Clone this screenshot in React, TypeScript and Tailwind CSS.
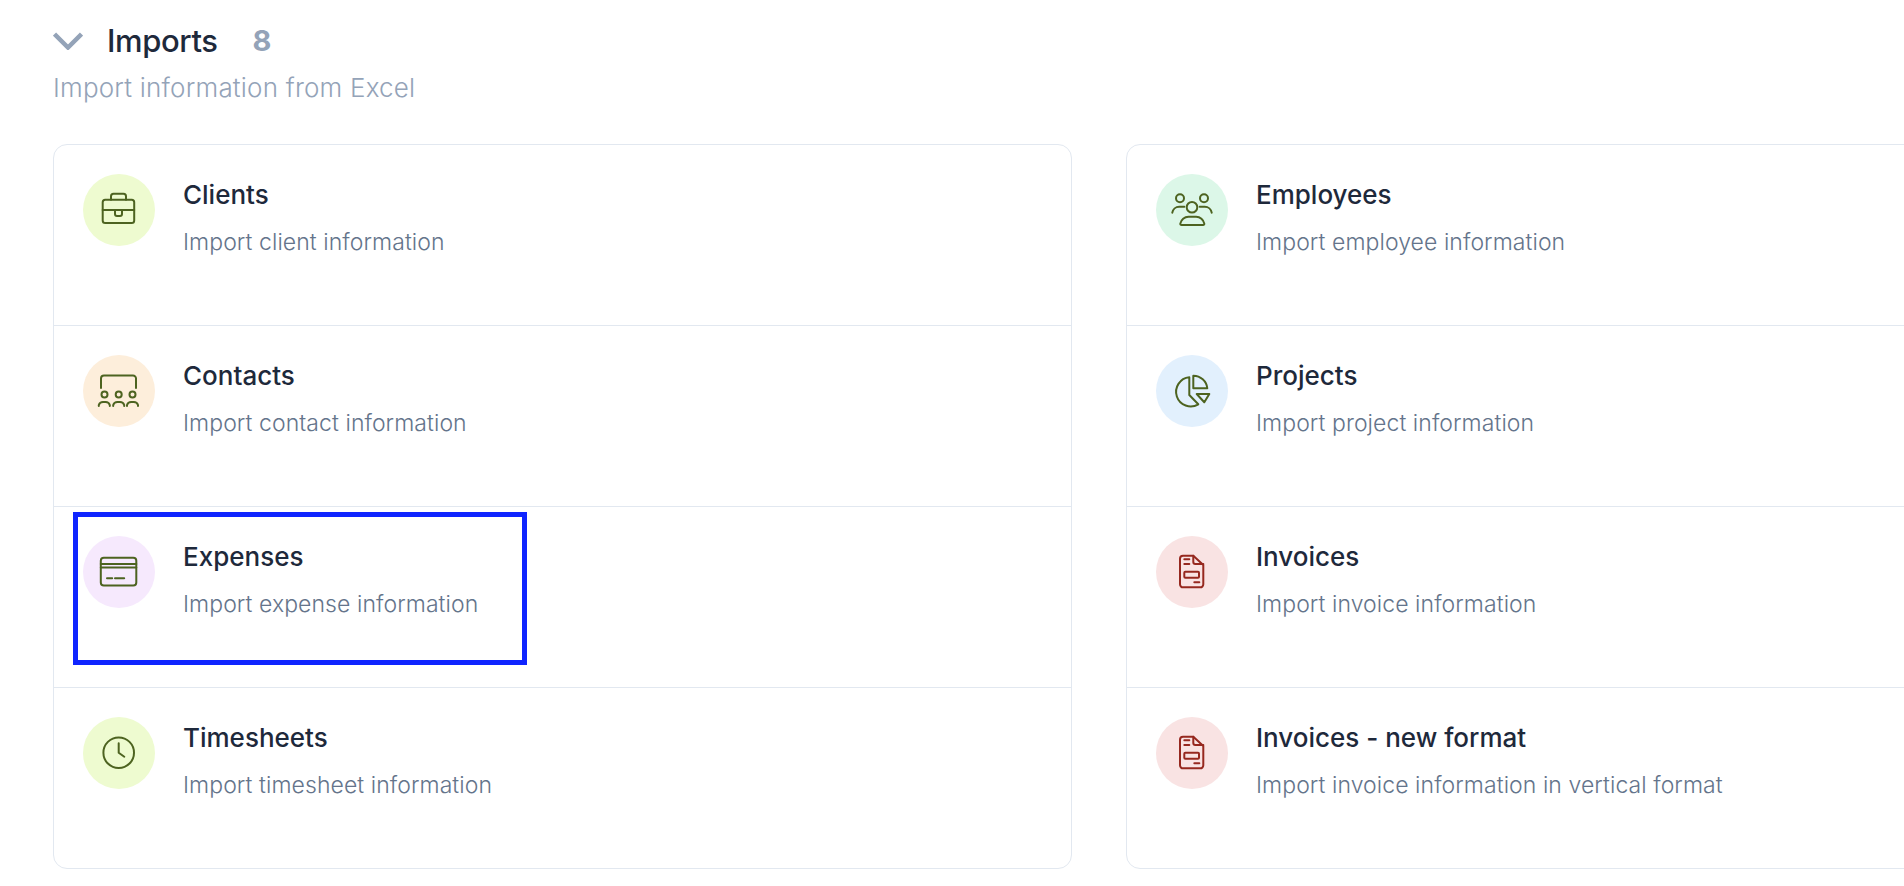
import React from 'react';

const GREEN = 'stroke-[#4d6320]';
const RED = 'stroke-[#96281f]';

const BriefcaseIcon = () => (
    <>
        <rect x="19.7" y="25.7" width="31.5" height="23.3" rx="2.5" />
        <path d="M28 25.7v-3.5a2.5 2.5 0 0 1 2.5-2.5h10a2.5 2.5 0 0 1 2.5 2.5v3.5" />
        <path d="M19.7 36h31.5" />
        <path d="M32 36v4a2 2 0 0 0 2 2h3a2 2 0 0 0 2-2v-4" />
    </>
);

const MeetingIcon = () => (
    <>
        <path d="M18 33V23.5a3 3 0 0 1 3-3h29a3 3 0 0 1 3 3V33" />
        <circle cx="21.5" cy="39.5" r="3" />
        <circle cx="35.7" cy="39.5" r="3" />
        <circle cx="49.5" cy="39.5" r="3" />
        <path d="M15.8 51v-1a4.5 4.5 0 0 1 4.5-3h2a4.5 4.5 0 0 1 4.5 3v1" />
        <path d="M30.2 51v-1a4.5 4.5 0 0 1 4.5-3h2a4.5 4.5 0 0 1 4.5 3v1" />
        <path d="M44 51v-1a4.5 4.5 0 0 1 4.5-3h2a4.5 4.5 0 0 1 4.5 3v1" />
    </>
);

const CardIcon = () => (
    <>
        <rect x="17.8" y="21.8" width="35.5" height="27.8" rx="3" />
        <path d="M17.8 28h35.5M17.8 31.5h35.5" />
        <path d="M24 42.3h5.2M32 42.3h9.2" />
    </>
);

const TeamIcon = () => (
    <>
        <circle cx="24" cy="24.3" r="4" />
        <circle cx="48" cy="24.3" r="4" />
        <circle cx="36" cy="33.3" r="5.3" />
        <path d="M16.3 38.7a7 7 0 0 1 7-6h5" />
        <path d="M55.7 38.7a7 7 0 0 0-7-6h-5" />
        <path d="M25.5 51a1.2 1.2 0 0 1-1.2-1.4 8.4 8.4 0 0 1 8.2-6.9h7.6a8.4 8.4 0 0 1 8.2 6.9 1.2 1.2 0 0 1-1.2 1.4Z" />
    </>
);

const PieIcon = () => (
    <>
        <path d="M33.3 22.3a14.6 14.6 0 1 0 9 27L33.3 40Z" />
        <path d="M37.3 20.7v12.6h14a14 14 0 0 0-14-12.6Z" />
        <path d="M40.7 39h12.6l-5 8.3Z" />
    </>
);

const InvoiceIcon = () => (
    <>
        <path d="M37.3 19.7H27a3 3 0 0 0-3 3v25.6a3 3 0 0 0 3 3h17.3a3 3 0 0 0 3-3V29Z" />
        <path d="M37.3 19.7V26a2 2 0 0 0 2 2h8" />
        <path d="M28.3 23.3h5M28.3 28h5" />
        <rect x="28.3" y="35.7" width="14.7" height="6" rx="1" />
        <path d="M38.3 46.3h5" />
    </>
);

const ClockIcon = () => (
    <>
        <circle cx="35.7" cy="35.7" r="15.3" />
        <path d="M35.7 26.3v9.4l5.6 4" />
    </>
);

const ImportRow = ({ title, description, circle, stroke, icon, last }: any) => (
    <div className={`flex gap-[28px] pt-[29px] pl-[29px] ${last ? 'h-[180px]' : 'h-[181px] border-b border-[#e2e8f0]'}`}>
        <div className={`h-[72px] w-[72px] shrink-0 rounded-full ${circle}`}>
            <svg viewBox="0 0 72 72" className={`h-[72px] w-[72px] fill-none stroke-2 ${stroke}`} strokeLinecap="round" strokeLinejoin="round">
                {icon}
            </svg>
        </div>
        <div>
            <div className="mt-[4px] text-[26px] leading-[34px] font-medium text-[#1e293b]">{title}</div>
            <div className="mt-[13px] text-[23px] leading-[34px] font-light tracking-[0.07px] text-[#64748b]">{description}</div>
        </div>
    </div>
);

const leftRows = [
    { title: 'Clients', description: 'Import client information', circle: 'bg-[#eefbd0]', stroke: GREEN, icon: <BriefcaseIcon /> },
    { title: 'Contacts', description: 'Import contact information', circle: 'bg-[#fdeedb]', stroke: GREEN, icon: <MeetingIcon /> },
    { title: 'Expenses', description: 'Import expense information', circle: 'bg-[#f6e9fd]', stroke: GREEN, icon: <CardIcon /> },
    { title: 'Timesheets', description: 'Import timesheet information', circle: 'bg-[#eefbd0]', stroke: GREEN, icon: <ClockIcon /> },
];

const rightRows = [
    { title: 'Employees', description: 'Import employee information', circle: 'bg-[#dcf7e8]', stroke: GREEN, icon: <TeamIcon /> },
    { title: 'Projects', description: 'Import project information', circle: 'bg-[#e2f0fd]', stroke: GREEN, icon: <PieIcon /> },
    { title: 'Invoices', description: 'Import invoice information', circle: 'bg-[#f9e3e3]', stroke: RED, icon: <InvoiceIcon /> },
    { title: 'Invoices - new format', description: 'Import invoice information in vertical format', circle: 'bg-[#f9e3e3]', stroke: RED, icon: <InvoiceIcon /> },
];

const ImportCard = ({ rows }: any) => (
    <div className="w-[1019px] shrink-0 rounded-[14px] border border-[#e2e8f0] bg-white">
        {rows.map((row: any, i: number) => (
            <ImportRow key={row.title} {...row} last={i === rows.length - 1} />
        ))}
    </div>
);

export default function App() {
    return (
        <div className="relative h-[886px] w-[1904px] overflow-hidden bg-white pt-[21px] pl-[53px] font-['Inter',sans-serif]">
            <div className="flex items-center">
                <svg viewBox="0 0 30 18" className="h-[18px] w-[30px] fill-none stroke-[#94a3b8] stroke-[4.5]">
                    <path d="M1.5 2L15 15.5 28.5 2" />
                </svg>
                <span className="ml-[24px] text-[31px] leading-[40px] font-medium tracking-[-0.4px] text-[#1e293b]">Imports</span>
                <span className="ml-[35px] text-[29px] leading-[40px] font-bold text-[#94a3b8]">8</span>
            </div>
            <div className="mt-[10px] text-[26px] leading-[34px] font-light tracking-[0.2px] text-[#94a3b8]">Import information from Excel</div>
            <div className="mt-[39px] flex gap-[54px]">
                <ImportCard rows={leftRows} />
                <ImportCard rows={rightRows} />
            </div>
            {/* annotation drawn over the Expenses row */}
            <div className="absolute top-[512px] left-[73px] h-[153px] w-[454px] border-[5px] border-[#0f24ff]" />
        </div>
    );
}
